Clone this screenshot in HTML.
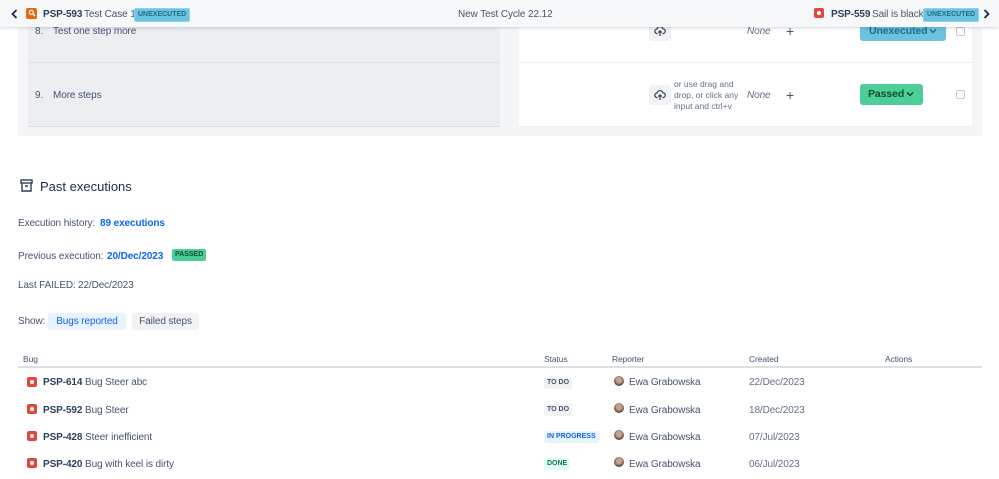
<!DOCTYPE html>
<html><head><meta charset="utf-8"><style>
*{margin:0;padding:0;box-sizing:border-box}
body{width:999px;height:479px;overflow:hidden;background:#fff;font-family:"Liberation Sans",sans-serif;font-size:10px;letter-spacing:-0.1px;color:#44546f;position:relative}
.a{position:absolute;white-space:nowrap}
.b{font-weight:bold;color:#2c3e5d}
.lnk{color:#0c66e4;font-weight:bold}
.lz{font-size:7px;font-weight:bold;padding:1px 3px;border-radius:2px;line-height:10px;letter-spacing:0}
.bug{position:absolute;width:10px;height:10px;background:#e2483d;border-radius:2px}
.bug:after{content:"";position:absolute;left:3px;top:3px;width:4px;height:4px;border-radius:50%;background:#fff}
.av{position:absolute;width:10px;height:10px;border-radius:50%;background:radial-gradient(circle at 50% 40%,#c9a48a 30%,#5a4a3e 70%)}
.up{position:absolute;width:22px;height:20px;background:#f1f2f4;border-radius:3px}
</style></head><body>
<div class="a" style="left:18px;top:0;width:964px;height:136px;background:#f4f5f7"></div>
<div class="a" style="left:28px;top:0;width:472px;height:127px;background:#eceef1"></div>
<div class="a" style="left:519px;top:0;width:453px;height:127px;background:#fff"></div>
<div class="a" style="left:28px;top:62px;width:472px;height:1px;background:#dcdfe4"></div>
<div class="a" style="left:28px;top:126px;width:472px;height:1px;background:#dcdfe4"></div>
<div class="a" style="left:519px;top:62px;width:453px;height:1px;background:#eceef1"></div>
<div class="a" style="left:519px;top:126px;width:453px;height:1px;background:#eceef1"></div>
<div class="a" style="left:35px;top:26px">8.</div><div class="a" style="left:53px;top:26px">Test one step more</div>
<div class="a" style="left:35px;top:90px">9.</div><div class="a" style="left:53px;top:90px">More steps</div>
<div class="up" style="left:649px;top:21px"></div>
<div class="up" style="left:649px;top:85px"></div>
<svg class="a" style="left:654px;top:25px" width="12" height="12" viewBox="0 0 12 12"><path d="M3.5 8.5H3a2.2 2.2 0 0 1 0-4.4 3 3 0 0 1 5.8-.3A2.3 2.3 0 0 1 9 8.5h-.5M6 11V6M4.3 7.6 6 5.9l1.7 1.7" fill="none" stroke="#2c3e5d" stroke-width="1.2"/></svg>
<svg class="a" style="left:654px;top:89px" width="12" height="12" viewBox="0 0 12 12"><path d="M3.5 8.5H3a2.2 2.2 0 0 1 0-4.4 3 3 0 0 1 5.8-.3A2.3 2.3 0 0 1 9 8.5h-.5M6 11V6M4.3 7.6 6 5.9l1.7 1.7" fill="none" stroke="#2c3e5d" stroke-width="1.2"/></svg>
<div class="a" style="left:674px;top:79px;font-size:8.5px;line-height:11px;color:#626f86;letter-spacing:0">or use drag and<br>drop, or click any<br>input and ctrl+v</div>
<div class="a" style="left:747px;top:26px;font-style:italic;color:#626f86">None</div>
<div class="a" style="left:747px;top:90px;font-style:italic;color:#626f86">None</div>
<div class="a" style="left:786px;top:23px;font-size:14px;color:#44546f">+</div>
<div class="a" style="left:786px;top:87px;font-size:14px;color:#44546f">+</div>
<div class="a" style="left:860px;top:22px;width:86px;height:19px;background:#6cc3e0;border-radius:3px;color:#1d6d8c;font-weight:bold;line-height:19px;padding-left:9px;font-size:10.5px">Unexecuted</div>
<svg class="a" style="left:929px;top:28px" width="8" height="6" viewBox="0 0 8 6"><path d="M1 1.5 4 4.5 7 1.5" fill="none" stroke="#1d6d8c" stroke-width="1.5"/></svg>
<div class="a" style="left:860px;top:84px;width:63px;height:21px;background:#4bce97;border-radius:3px;color:#164b35;font-weight:bold;line-height:21px;padding-left:8px;font-size:10.5px">Passed</div>
<svg class="a" style="left:906px;top:91px" width="8" height="6" viewBox="0 0 8 6"><path d="M1 1.5 4 4.5 7 1.5" fill="none" stroke="#164b35" stroke-width="1.5"/></svg>
<div class="a" style="left:956px;top:27px;width:9px;height:9px;border:1px solid #c1c7d0;border-radius:2px;background:#fff"></div>
<div class="a" style="left:956px;top:90px;width:9px;height:9px;border:1px solid #c1c7d0;border-radius:2px;background:#fff"></div>
<!-- header -->
<div class="a" style="left:0;top:0;width:999px;height:27px;background:#f7f8f9;box-shadow:0 1px 3px rgba(9,30,66,.18)"></div>
<svg class="a" style="left:11px;top:9px" width="7" height="10" viewBox="0 0 7 10"><path d="M5.5 1 1.5 5l4 4" fill="none" stroke="#172b4d" stroke-width="1.8"/></svg>
<div class="a" style="left:26px;top:8px;width:11px;height:11px;background:#e56910;border-radius:2px"></div>
<svg class="a" style="left:28px;top:9px" width="8" height="8" viewBox="0 0 8 8"><circle cx="3.3" cy="3.3" r="2" fill="none" stroke="#fff" stroke-width="1.2"/><path d="M4.8 4.8 7 7" stroke="#fff" stroke-width="1.3"/></svg>
<div class="a b" style="left:43px;top:9px">PSP-593</div>
<div class="a" style="left:84px;top:9px">Test Case 1</div>
<div class="a lz" style="left:134px;top:8px;background:#6cc3e0;color:#1d6d8c;border:1px solid #8fd3ea">UNEXECUTED</div>
<div class="a" style="left:458px;top:9px">New Test Cycle 22.12</div>
<div class="bug" style="left:814px;top:8px"></div>
<div class="a b" style="left:831px;top:9px">PSP-559</div>
<div class="a" style="left:872px;top:9px">Sail is black</div>
<div class="a lz" style="left:923px;top:8px;background:#6cc3e0;color:#1d6d8c;border:1px solid #8fd3ea">UNEXECUTED</div>
<svg class="a" style="left:983px;top:9px" width="7" height="10" viewBox="0 0 7 10"><path d="M1.5 1l4 4-4 4" fill="none" stroke="#172b4d" stroke-width="1.8"/></svg>
<!-- past executions -->
<svg class="a" style="left:20px;top:179px" width="13" height="13" viewBox="0 0 13 13"><rect x="1" y="1" width="11" height="3" fill="none" stroke="#2c3e5d" stroke-width="1.4"/><path d="M2 4v8h9V4M5 7h3" fill="none" stroke="#2c3e5d" stroke-width="1.4"/></svg>
<div class="a" style="left:40px;top:179px;font-size:13px;letter-spacing:0;color:#172b4d">Past executions</div>
<div class="a" style="left:18px;top:218px">Execution history:</div><div class="a lnk" style="left:100px;top:218px">89 executions</div>
<div class="a" style="left:18px;top:251px">Previous execution:</div><div class="a lnk" style="left:107px;top:251px">20/Dec/2023</div>
<div class="a lz" style="left:172px;top:249px;background:#4bce97;color:#164b35">PASSED</div>
<div class="a" style="left:18px;top:280px">Last FAILED:</div><div class="a" style="left:78px;top:280px">22/Dec/2023</div>
<div class="a" style="left:18px;top:316px">Show:</div>
<div class="a" style="left:48px;top:313px;width:78px;height:17px;background:#e9f2ff;border-radius:3px;color:#0c66e4;line-height:17px;text-align:center">Bugs reported</div>
<div class="a" style="left:132px;top:313px;width:67px;height:17px;background:#f1f2f4;border-radius:3px;color:#44546f;line-height:17px;text-align:center">Failed steps</div>
<!-- table -->
<div class="a" style="left:23px;top:354px;font-size:8.5px">Bug</div>
<div class="a" style="left:544px;top:354px;font-size:8.5px">Status</div>
<div class="a" style="left:612px;top:354px;font-size:8.5px">Reporter</div>
<div class="a" style="left:749px;top:354px;font-size:8.5px">Created</div>
<div class="a" style="left:885px;top:354px;font-size:8.5px">Actions</div>
<div class="a" style="left:18px;top:366px;width:964px;height:2px;background:#dcdfe4"></div>

<div class="bug" style="left:27px;top:377px"></div><div class="a" style="left:43px;top:377px"><span class="b">PSP-614</span> Bug Steer abc</div>
<div class="a lz" style="left:544px;top:377px;background:#f1f2f4;color:#44546f">TO DO</div>
<div class="av" style="left:614px;top:376px"></div><div class="a" style="left:629px;top:377px">Ewa Grabowska</div>
<div class="a" style="left:749px;top:377px;color:#626f86">22/Dec/2023</div>

<div class="bug" style="left:27px;top:404px"></div><div class="a" style="left:43px;top:405px"><span class="b">PSP-592</span> Bug Steer</div>
<div class="a lz" style="left:544px;top:404px;background:#f1f2f4;color:#44546f">TO DO</div>
<div class="av" style="left:614px;top:403px"></div><div class="a" style="left:629px;top:405px">Ewa Grabowska</div>
<div class="a" style="left:749px;top:405px;color:#626f86">18/Dec/2023</div>

<div class="bug" style="left:27px;top:431px"></div><div class="a" style="left:43px;top:432px"><span class="b">PSP-428</span> Steer inefficient</div>
<div class="a lz" style="left:544px;top:431px;background:#e9f2ff;color:#0c66e4">IN PROGRESS</div>
<div class="av" style="left:614px;top:430px"></div><div class="a" style="left:629px;top:432px">Ewa Grabowska</div>
<div class="a" style="left:749px;top:432px;color:#626f86">07/Jul/2023</div>

<div class="bug" style="left:27px;top:458px"></div><div class="a" style="left:43px;top:459px"><span class="b">PSP-420</span> Bug with keel is dirty</div>
<div class="a lz" style="left:544px;top:458px;background:#dcfff1;color:#216e4e">DONE</div>
<div class="av" style="left:614px;top:457px"></div><div class="a" style="left:629px;top:459px">Ewa Grabowska</div>
<div class="a" style="left:749px;top:459px;color:#626f86">06/Jul/2023</div>
</body></html>
